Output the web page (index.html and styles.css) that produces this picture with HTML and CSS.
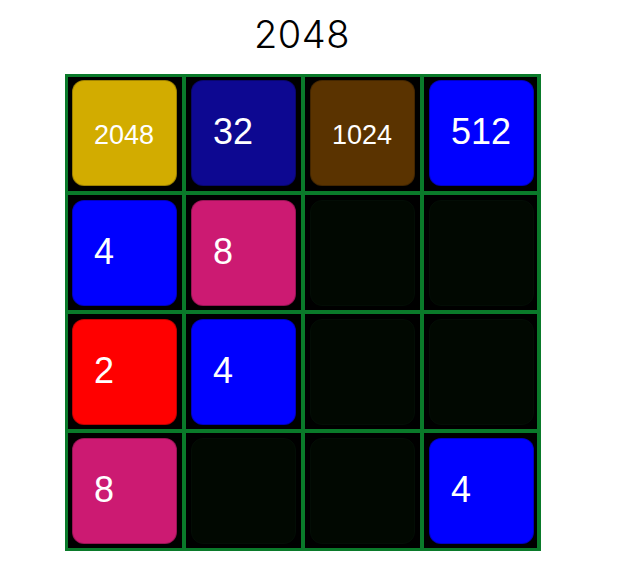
FILE: index.html
```html
<!DOCTYPE html>
<html lang="en">
<head>
  <meta charset="UTF-8" />
  <title>2048</title>
  <link rel="stylesheet" href="styles.css">
</head>
<body>
  <div class="game">
    <h1 class="title">2048</h1>
    <div class="board">
      <div class="cell"><div class="tile t2048"><span class="small">2048</span></div></div>
      <div class="cell"><div class="tile t32">32</div></div>
      <div class="cell"><div class="tile t1024"><span class="small">1024</span></div></div>
      <div class="cell"><div class="tile t512">512</div></div>

      <div class="cell"><div class="tile t4">4</div></div>
      <div class="cell"><div class="tile t8">8</div></div>
      <div class="cell"><div class="tile empty"></div></div>
      <div class="cell"><div class="tile empty"></div></div>

      <div class="cell"><div class="tile t2">2</div></div>
      <div class="cell"><div class="tile t4">4</div></div>
      <div class="cell"><div class="tile empty"></div></div>
      <div class="cell"><div class="tile empty"></div></div>

      <div class="cell"><div class="tile t8">8</div></div>
      <div class="cell"><div class="tile empty"></div></div>
      <div class="cell"><div class="tile empty"></div></div>
      <div class="cell"><div class="tile t4">4</div></div>
    </div>
  </div>
</body>
</html>
```

FILE: styles.css
```css
* {
  box-sizing: border-box;
  margin: 0;
  padding: 0;
}

body {
  background: #fff;
  font-family: 'Liberation Sans', Arial, sans-serif;
}

.game {
  width: 476px;
  margin-left: 65px;
}

.title {
  margin-top: 12px;
  height: 44px;
  line-height: 44px;
  padding-right: 2px;
  text-align: center;
  font-family: Inter, 'Noto Sans', sans-serif;
  font-size: 38px;
  font-weight: 300;
  letter-spacing: 0.5px;
  color: #000;
}

.board {
  margin-top: 18px;
  width: 476px;
  display: grid;
  grid-template-columns: 114px 115px 115px 113px;
  grid-template-rows: 114px 115px 115px 115px;
  gap: 4px;
  padding: 3px 4px 3px 3px;
  background: #0a7a2a;
}

.cell {
  background: #000;
}

.tile {
  width: 105px;
  height: 106px;
  margin: 5px 0 0 5px;
  padding-left: 21px;
  border-radius: 12px;
  border: 1px solid rgba(0, 0, 0, 0.25);
  color: #fff;
  font-size: 36px;
  line-height: 102px;
}

/* first row sits a little higher, first column a little further left */
.cell:nth-child(-n+4) .tile {
  margin-top: 3px;
}

.cell:nth-child(4n+1) .tile {
  margin-left: 4px;
}

.small {
  font-size: 27px;
}

.empty {
  background: #010801;
  border-color: #030d05;
}

.t2 { background: #ff0000; }
.t4 { background: #0000ff; }
.t8 { background: #cc1a72; }
.t32 { background: #0d0891; }
.t512 { background: #0000ff; }
.t1024 { background: #5a3300; }
.t2048 { background: #d2ac00; }
```
